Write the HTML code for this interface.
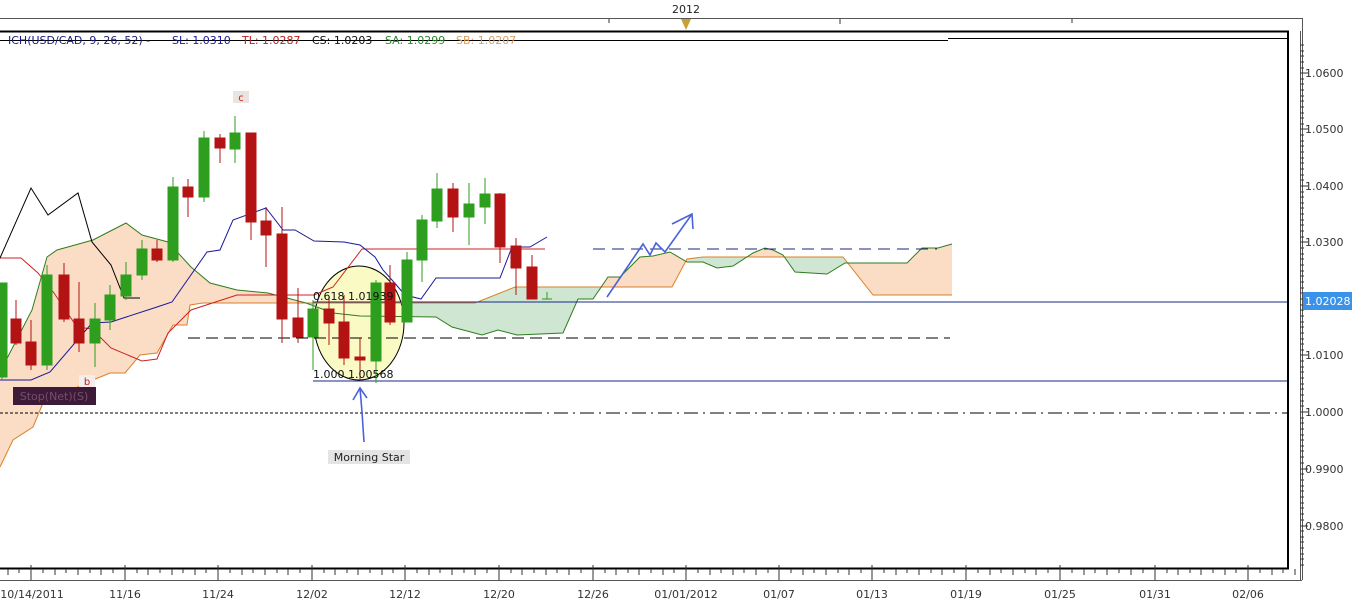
<!DOCTYPE html>
<html><head><meta charset="utf-8"><style>
html,body{margin:0;padding:0;background:#fff;}
svg{display:block;font-family:"DejaVu Sans","Liberation Sans",sans-serif;}
</style></head><body>
<svg width="1359" height="606" viewBox="0 0 1359 606" xmlns="http://www.w3.org/2000/svg">
<defs>
<clipPath id="aboveB"><polygon points="0,0 0,467 13,440 33,427 43,403 93,380 110,373 125,373 140,355 157,353 173,325 187,325 190,305 203,303 475,303 515,287 672,287 687,259 703,257 843,257 873,295 952,295 952,0"/></clipPath>
<clipPath id="belowB"><polygon points="0,600 0,467 13,440 33,427 43,403 93,380 110,373 125,373 140,355 157,353 173,325 187,325 190,305 203,303 475,303 515,287 672,287 687,259 703,257 843,257 873,295 952,295 952,600"/></clipPath>
</defs>
<!-- cloud fills -->
<polygon clip-path="url(#aboveB)" fill="#fbdcc4" points="0,600 0,372 32,310 47,257 57,250 93,240 126,223 142,235 168,242 191,267 210,283 237,290 268,293 306,303 333,313 360,316 436,317 452,327 482,335 498,330 517,335 563,333 578,299 593,299 608,277 620,277 640,257 653,256 670,252 687,262 703,262 717,268 733,266 753,253 765,248 773,250 783,255 795,272 827,274 845,263 907,263 922,248 938,248 952,244 952,600"/>
<polygon clip-path="url(#belowB)" fill="#cfe7d2" points="0,0 0,372 32,310 47,257 57,250 93,240 126,223 142,235 168,242 191,267 210,283 237,290 268,293 306,303 333,313 360,316 436,317 452,327 482,335 498,330 517,335 563,333 578,299 593,299 608,277 620,277 640,257 653,256 670,252 687,262 703,262 717,268 733,266 753,253 765,248 773,250 783,255 795,272 827,274 845,263 907,263 922,248 938,248 952,244 952,0"/>
<!-- ellipse -->
<ellipse cx="359" cy="323" rx="45" ry="57" fill="#fafac4" stroke="#000" stroke-width="1"/>
<!-- lines -->
<polyline fill="none" stroke="#d9822b" stroke-width="1" points="0,467 13,440 33,427 43,403 93,380 110,373 125,373 140,355 157,353 173,325 187,325 190,305 203,303 475,303 515,287 672,287 687,259 703,257 843,257 873,295 952,295"/>
<polyline fill="none" stroke="#2e7d1e" stroke-width="1" points="0,372 32,310 47,257 57,250 93,240 126,223 142,235 168,242 191,267 210,283 237,290 268,293 306,303 333,313 360,316 436,317 452,327 482,335 498,330 517,335 563,333 578,299 593,299 608,277 620,277 640,257 653,256 670,252 687,262 703,262 717,268 733,266 753,253 765,248 773,250 783,255 795,272 827,274 845,263 907,263 922,248 938,248 952,244"/>
<line x1="188" y1="338" x2="950" y2="338" stroke="#000" stroke-dasharray="12,6"/>
<line x1="593" y1="249" x2="937" y2="249" stroke="#1a237e" stroke-dasharray="12,7"/>
<line x1="313" y1="302" x2="1288" y2="302" stroke="#1a2a8a"/>
<line x1="313" y1="381" x2="1288" y2="381" stroke="#1a2a8a"/>
<line x1="0" y1="413" x2="528" y2="413" stroke="#000" stroke-dasharray="3,2"/>
<line x1="528" y1="413" x2="1288" y2="413" stroke="#000" stroke-dasharray="14,5,2,5"/>
<polyline fill="none" stroke="#cc2222" points="0,258 21,258 38,273 54,293 77,327 92,329 111,348 142,361 157,359 168,333 191,310 237,295 314,295 333,287 362,249 545,249"/>
<polyline fill="none" stroke="#1a1a9a" points="0,380 31,380 50,372 92,323 111,322 157,307 172,302 207,252 220,250 233,220 266,208 283,230 295,230 314,241 344,242 360,245 375,257 383,270 392,280 405,295 421,299 436,278 500,278 512,247 530,247 547,237"/>
<polyline fill="none" stroke="#000" points="0,258 31,188 48,215 78,193 92,242 111,265 124,298 140,298"/>
<!-- candles -->
<g stroke-width="1">
<g fill="#2e9e1e" stroke="#2e9e1e">
<line x1="2" y1="283" x2="2" y2="380"/><rect x="-3" y="283" width="10" height="94"/>
<line x1="47" y1="265" x2="47" y2="370"/><rect x="42" y="275" width="10" height="90"/>
<line x1="95" y1="303" x2="95" y2="367"/><rect x="90" y="319" width="10" height="24"/>
<line x1="110" y1="285" x2="110" y2="330"/><rect x="105" y="295" width="10" height="25"/>
<line x1="126" y1="262" x2="126" y2="300"/><rect x="121" y="275" width="10" height="21"/>
<line x1="142" y1="240" x2="142" y2="280"/><rect x="137" y="249" width="10" height="26"/>
<line x1="173" y1="177" x2="173" y2="262"/><rect x="168" y="187" width="10" height="73"/>
<line x1="204" y1="131" x2="204" y2="202"/><rect x="199" y="138" width="10" height="59"/>
<line x1="235" y1="116" x2="235" y2="163"/><rect x="230" y="133" width="10" height="16"/>
<line x1="313" y1="300" x2="313" y2="370"/><rect x="308" y="309" width="10" height="28"/>
<line x1="376" y1="280" x2="376" y2="383"/><rect x="371" y="283" width="10" height="78"/>
<line x1="407" y1="252" x2="407" y2="322"/><rect x="402" y="260" width="10" height="62"/>
<line x1="422" y1="215" x2="422" y2="282"/><rect x="417" y="220" width="10" height="40"/>
<line x1="437" y1="173" x2="437" y2="228"/><rect x="432" y="189" width="10" height="32"/>
<line x1="469" y1="183" x2="469" y2="245"/><rect x="464" y="204" width="10" height="13"/>
<line x1="485" y1="178" x2="485" y2="224"/><rect x="480" y="194" width="10" height="13"/>
<line x1="547" y1="292" x2="547" y2="299"/><line x1="542" y1="299" x2="552" y2="299"/>
</g>
<g fill="#b31313" stroke="#b31313">
<line x1="16" y1="300" x2="16" y2="345"/><rect x="11" y="319" width="10" height="24"/>
<line x1="31" y1="320" x2="31" y2="370"/><rect x="26" y="342" width="10" height="23"/>
<line x1="64" y1="263" x2="64" y2="322"/><rect x="59" y="275" width="10" height="44"/>
<line x1="79" y1="282" x2="79" y2="352"/><rect x="74" y="319" width="10" height="24"/>
<line x1="157" y1="240" x2="157" y2="262"/><rect x="152" y="249" width="10" height="11"/>
<line x1="188" y1="179" x2="188" y2="217"/><rect x="183" y="187" width="10" height="10"/>
<line x1="220" y1="134" x2="220" y2="163"/><rect x="215" y="138" width="10" height="10"/>
<line x1="251" y1="133" x2="251" y2="240"/><rect x="246" y="133" width="10" height="89"/>
<line x1="266" y1="207" x2="266" y2="267"/><rect x="261" y="221" width="10" height="14"/>
<line x1="282" y1="207" x2="282" y2="343"/><rect x="277" y="234" width="10" height="85"/>
<line x1="298" y1="288" x2="298" y2="343"/><rect x="293" y="318" width="10" height="19"/>
<line x1="329" y1="297" x2="329" y2="345"/><rect x="324" y="309" width="10" height="14"/>
<line x1="344" y1="295" x2="344" y2="365"/><rect x="339" y="322" width="10" height="36"/>
<line x1="360" y1="338" x2="360" y2="380"/><rect x="355" y="357" width="10" height="3"/>
<line x1="390" y1="265" x2="390" y2="325"/><rect x="385" y="283" width="10" height="39"/>
<line x1="453" y1="183" x2="453" y2="232"/><rect x="448" y="189" width="10" height="28"/>
<line x1="500" y1="193" x2="500" y2="263"/><rect x="495" y="194" width="10" height="53"/>
<line x1="516" y1="238" x2="516" y2="295"/><rect x="511" y="246" width="10" height="22"/>
<line x1="532" y1="255" x2="532" y2="299"/><rect x="527" y="267" width="10" height="32"/>
</g>
</g>
<!-- arrows -->
<g fill="none" stroke="#4a62d8" stroke-width="1.6">
<polyline points="364,442 362,412 360,388"/>
<polyline points="353,400 360,388 367,398"/>
<polyline points="607,297 643,244 650,255 656,243 665,252 692,214"/>
<polyline points="672,224 692,214 693,229"/>
</g>
<!-- fib texts -->
<text x="313" y="300" font-size="11" fill="#111">0.618 1.01939</text>
<text x="313" y="378" font-size="11" fill="#111">1.000 1.00568</text>
<!-- labels -->
<rect x="233" y="91" width="16" height="12" fill="#eae4e0"/>
<text x="241" y="101" font-size="10" fill="#c02020" text-anchor="middle">c</text>
<rect x="79" y="375" width="16" height="12" fill="#f3eeec"/>
<text x="87" y="385" font-size="10" fill="#c02020" text-anchor="middle">b</text>
<rect x="13" y="387" width="83" height="18" fill="#3d1a38"/>
<text x="54" y="400" font-size="11" fill="#74506c" text-anchor="middle">Stop(Net)(S)</text>
<rect x="328" y="450" width="82" height="14" fill="#e4e4e4"/>
<text x="369" y="461" font-size="11" fill="#222" text-anchor="middle">Morning Star</text>
<!-- frame -->
<line x1="0" y1="18.5" x2="1302" y2="18.5" stroke="#555"/>
<line x1="1302.5" y1="18" x2="1302.5" y2="580" stroke="#555"/>
<line x1="0" y1="31.5" x2="1289" y2="31.5" stroke="#000" stroke-width="2"/>
<line x1="0" y1="40.5" x2="948" y2="40.5" stroke="#000"/>
<line x1="948" y1="38.5" x2="1288" y2="38.5" stroke="#000"/>
<line x1="1288" y1="31" x2="1288" y2="569" stroke="#000" stroke-width="2"/>
<line x1="0" y1="568.5" x2="1289" y2="568.5" stroke="#000" stroke-width="2"/>
<line x1="1300.5" y1="31" x2="1300.5" y2="580" stroke="#555"/>
<line x1="0" y1="580.5" x2="1302" y2="580.5" stroke="#555"/>
<polygon points="681,19 691,19 686,30" fill="#c9a035"/>
<text x="686" y="13" font-size="11" fill="#222" text-anchor="middle">2012</text>
<g stroke="#333">
<line x1="609" y1="19" x2="609" y2="23"/><line x1="840" y1="19" x2="840" y2="24"/><line x1="1072" y1="19" x2="1072" y2="23"/>
</g>
<!-- legend -->
<g font-size="11">
<text x="8" y="44" fill="#1a1a80">ICH(USD/CAD, 9, 26, 52) -</text>
<text x="172" y="44" fill="#1a1a9a">SL: 1.0310</text>
<text x="242" y="44" fill="#c02020">TL: 1.0287</text>
<text x="312" y="44" fill="#111">CS: 1.0203</text>
<text x="385" y="44" fill="#2a8a2a">SA: 1.0299</text>
<text x="456" y="44" fill="#e0a060">SB: 1.0207</text>
</g>
<!-- right axis -->
<g stroke="#333" id="rt"></g>
<g stroke="#333">
<path d="M1300 45h4M1300 51h4M1300 56h4M1300 62h4M1300 68h4M1300 73h8M1300 79h4M1300 84h4M1300 90h4M1300 96h4M1300 101h4M1300 107h4M1300 113h4M1300 118h4M1300 124h4M1300 129h8M1300 135h4M1300 141h4M1300 146h4M1300 152h4M1300 158h4M1300 163h4M1300 169h4M1300 175h4M1300 180h4M1300 186h8M1300 192h4M1300 197h4M1300 203h4M1300 208h4M1300 214h4M1300 220h4M1300 225h4M1300 231h4M1300 237h4M1300 242h8M1300 248h4M1300 254h4M1300 259h4M1300 265h4M1300 271h4M1300 276h4M1300 282h4M1300 288h4M1300 293h4M1300 299h8M1300 305h4M1300 310h4M1300 316h4M1300 322h4M1300 327h4M1300 333h4M1300 339h4M1300 344h4M1300 350h4M1300 355h8M1300 361h4M1300 367h4M1300 372h4M1300 378h4M1300 384h4M1300 389h4M1300 395h4M1300 401h4M1300 406h4M1300 412h8M1300 418h4M1300 423h4M1300 429h4M1300 435h4M1300 440h4M1300 446h4M1300 451h4M1300 457h4M1300 463h4M1300 469h8M1300 474h4M1300 480h4M1300 486h4M1300 491h4M1300 497h4M1300 503h4M1300 508h4M1300 514h4M1300 520h4M1300 526h8M1300 531h4M1300 537h4M1300 542h4M1300 548h4M1300 554h4M1300 559h4M1300 565h4"/>
</g>
<g font-size="11" fill="#333">
<text x="1305" y="77">1.0600</text>
<text x="1305" y="133">1.0500</text>
<text x="1305" y="190">1.0400</text>
<text x="1305" y="246">1.0300</text>
<text x="1305" y="359">1.0100</text>
<text x="1305" y="416">1.0000</text>
<text x="1305" y="473">0.9900</text>
<text x="1305" y="530">0.9800</text>
</g>
<rect x="1303" y="292" width="49" height="18" fill="#3a93e8"/>
<text x="1305" y="305" font-size="11" fill="#fff">1.02028</text>
<!-- bottom axis -->
<g stroke="#333">
<path d="M31 565v15M125 565v15M218 565v15M312 565v15M405 565v15M499 565v15M593 565v15M686 565v15M779 565v15M872 565v15M966 565v15M1060 565v15M1155 565v15M1248 565v15"/>
<path d="M8 569v6M19 569v4M43 569v4M55 569v6M66 569v4M78 569v6M90 569v4M101 569v6M113 569v4M137 569v4M148 569v6M160 569v4M172 569v6M183 569v4M195 569v6M206 569v4M230 569v4M242 569v6M253 569v4M265 569v6M277 569v4M288 569v6M300 569v4M324 569v4M335 569v6M347 569v4M358 569v6M370 569v4M382 569v6M393 569v4M417 569v4M429 569v6M440 569v4M452 569v6M464 569v4M475 569v6M487 569v4M511 569v4M522 569v6M534 569v4M546 569v6M557 569v4M569 569v6M581 569v4M605 569v4M616 569v6M628 569v4M639 569v6M651 569v4M663 569v6M674 569v4M698 569v4M710 569v6M721 569v4M733 569v6M744 569v4M756 569v6M768 569v4M791 569v4M803 569v6M814 569v4M826 569v6M838 569v4M849 569v6M861 569v4M884 569v4M896 569v6M907 569v4M919 569v6M931 569v4M942 569v6M954 569v4M978 569v4M990 569v6M1001 569v4M1013 569v6M1025 569v4M1036 569v6M1048 569v4M1072 569v4M1084 569v6M1095 569v4M1107 569v6M1119 569v4M1131 569v6M1143 569v4M1167 569v4M1178 569v6M1190 569v4M1201 569v6M1213 569v4M1225 569v6M1236 569v4M1260 569v4M1272 569v6M1283 569v4M1295 569v6"/>
</g>
<g font-size="11" fill="#333" text-anchor="middle">
<text x="32" y="598">10/14/2011</text>
<text x="125" y="598">11/16</text>
<text x="218" y="598">11/24</text>
<text x="312" y="598">12/02</text>
<text x="405" y="598">12/12</text>
<text x="499" y="598">12/20</text>
<text x="593" y="598">12/26</text>
<text x="686" y="598">01/01/2012</text>
<text x="779" y="598">01/07</text>
<text x="872" y="598">01/13</text>
<text x="966" y="598">01/19</text>
<text x="1060" y="598">01/25</text>
<text x="1155" y="598">01/31</text>
<text x="1248" y="598">02/06</text>
</g>
</svg>
</body></html>
